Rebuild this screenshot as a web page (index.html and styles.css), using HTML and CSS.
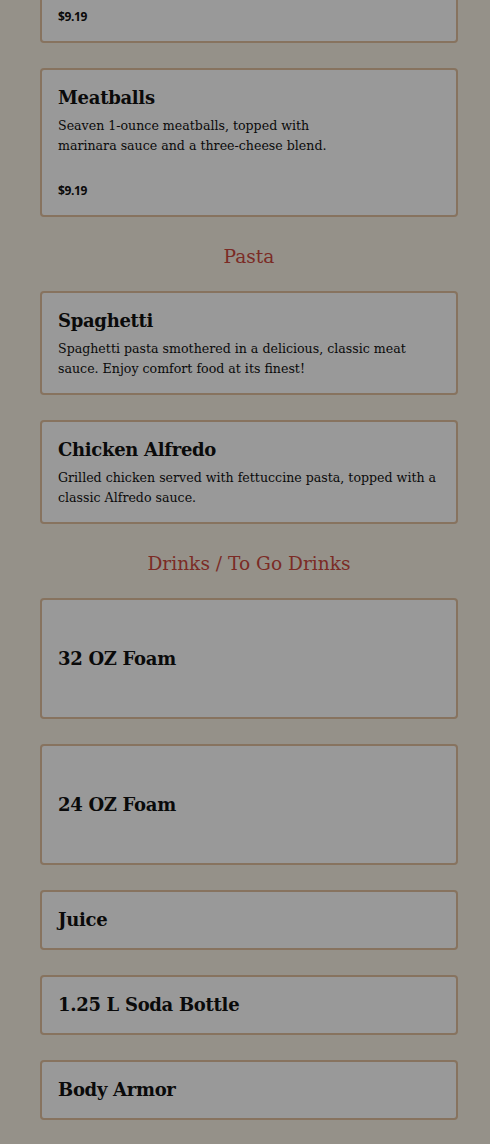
FILE: index.html
```html
<!DOCTYPE html>
<html lang="en">
<head>
  <meta charset="UTF-8">
  <meta name="viewport" content="width=device-width, initial-scale=1.0">
  <title>Menu</title>
  <link rel="stylesheet" href="styles.css">
</head>
<body>
  <div class="menu">
    <div class="menu-item menu-item-cut">
      <p class="menu-price">$9.19</p>
    </div>
    <div class="menu-item">
      <h3 class="menu-title">Meatballs</h3>
      <p class="menu-desc">Seaven 1-ounce meatballs, topped with<br>marinara sauce and a three-cheese blend.</p>
      <p class="menu-price spaced">$9.19</p>
    </div>

    <h2 class="menu-category">Pasta</h2>
    <div class="menu-item">
      <h3 class="menu-title">Spaghetti</h3>
      <p class="menu-desc">Spaghetti pasta smothered in a delicious, classic meat sauce. Enjoy comfort food at its finest!</p>
    </div>
    <div class="menu-item">
      <h3 class="menu-title">Chicken Alfredo</h3>
      <p class="menu-desc">Grilled chicken served with fettuccine pasta, topped with a classic Alfredo sauce.</p>
    </div>

    <h2 class="menu-category">Drinks / To Go Drinks</h2>
    <div class="menu-item tall">
      <h3 class="menu-title">32 OZ Foam</h3>
    </div>
    <div class="menu-item tall">
      <h3 class="menu-title">24 OZ Foam</h3>
    </div>
    <div class="menu-item">
      <h3 class="menu-title">Juice</h3>
    </div>
    <div class="menu-item">
      <h3 class="menu-title">1.25 L Soda Bottle</h3>
    </div>
    <div class="menu-item">
      <h3 class="menu-title">Body Armor</h3>
    </div>
  </div>
</body>
</html>
```

FILE: styles.css
```css
* {
  margin: 0;
  padding: 0;
  box-sizing: border-box;
}
body {
  background-color: #959189;
  font-family: "DejaVu Serif", "Liberation Serif", serif;
  color: #0a0a0a;
}
.menu {
  padding: 0 32px 0 40px;
  margin-top: -9px;
}
.menu-item {
  background-color: #999999;
  border: 2px solid #87735f;
  border-radius: 4px;
  padding: 16px;
  margin-bottom: 25px;
}
.menu-item.tall {
  min-height: 121px;
  display: flex;
  align-items: center;
}
.menu-title {
  font-size: 18px;
  line-height: 24px;
  font-weight: bold;
  letter-spacing: -0.3px;
}
.menu-desc {
  font-size: 12.6px;
  line-height: 20px;
  margin-top: 6px;
  margin-bottom: -2px;
}
.menu-price {
  font-family: "Open Sans", "Liberation Sans", sans-serif;
  font-size: 12px;
  line-height: 16px;
  font-weight: bold;
  letter-spacing: -0.4px;
}
.menu-price.spaced {
  margin-top: 29px;
}
.menu-category {
  text-align: center;
  font-size: 18.6px;
  line-height: 30px;
  font-weight: normal;
  color: #7b2b25;
  margin-bottom: 19px;
}
```
